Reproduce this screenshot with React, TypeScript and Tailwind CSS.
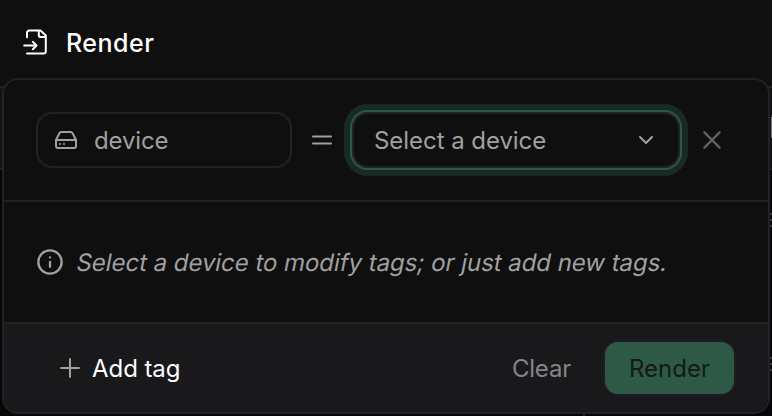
import React from "react";

function Svg({ size, className, children, sw = 2, box = 24 }: { size: number; className?: string; children: React.ReactNode; sw?: number; box?: number }) {
  return (
    <svg width={size} height={size} viewBox={`0 0 ${box} ${box}`} fill="none" stroke="currentColor" strokeWidth={sw} strokeLinecap="round" strokeLinejoin="round" className={`shrink-0 ${className ?? ""}`}>
      {children}
    </svg>
  );
}

// Edge of a table row's text, mostly hidden behind the popover
function Sliver({ className }: { className: string }) {
  return (
    <div className={`absolute right-0 flex w-0.5 flex-col gap-1 ${className}`}>
      <i className="h-0.5 bg-[#37373a]" />
      <i className="h-0.5 bg-[#37373a]" />
      <i className="h-0.5 bg-[#37373a]" />
    </div>
  );
}

export default function App() {
  return (
    <div className="relative flex h-[416px] w-[772px] flex-col overflow-hidden bg-[#0f0f0f] font-['Inter','Liberation_Sans',sans-serif] text-[24px] leading-8 text-[#a0a0a0]">
      {/* page content that shows round the popover */}
      <div className="absolute inset-x-0 top-[86px] bottom-0 border-t-2 border-[#222225] bg-[#060608]">
        <div className="h-[82px] border-b-2 border-[#222225] bg-[#121214]" />
        <div className="absolute top-[29px] right-0 h-[21px] w-px bg-[#77777a]" />
        <Sliver className="top-[125px]" />
        <Sliver className="top-[269px]" />
        <div className="absolute right-[187px] bottom-0 h-[6px] w-0.5 bg-[#222225]" />
      </div>

      <header className="flex h-[78px] shrink-0 items-center pt-2 pl-[21px] text-white">
        <Svg size={28} box={28}>
          <path d="M6 8.2V3.8a2.3 2.3 0 0 1 2.3-2.3h11.2l5.3 5v15.8a2.3 2.3 0 0 1-2.3 2.3H6" />
          <path d="M17.8 1.8v4.4a1.8 1.8 0 0 0 1.8 1.8h5" />
          <path d="M3.2 16.5h12" />
          <path d="m11.8 12.8 3.7 3.7-3.7 3.7" />
        </Svg>
        <h1 className="ml-[17px] text-[25px] font-medium tracking-[0.5px]">Render</h1>
      </header>

      <section className="relative mx-[2px] flex h-[336px] flex-col overflow-hidden rounded-[16px] border-2 border-[#222225] bg-[#0f0f0f]">
        <div className="flex h-[122px] shrink-0 items-center border-b-2 border-[#222225] pl-8">
          <div className="flex h-14 w-64 items-center rounded-[16px] border-2 border-[#222225] pl-4">
            <Svg size={24}>
              <path d="M22 12H2" />
              <path d="M5.45 5.11 2 12v6a2 2 0 0 0 2 2h16a2 2 0 0 0 2-2v-6l-3.45-6.89A2 2 0 0 0 16.76 4H7.24a2 2 0 0 0-1.79 1.11z" />
              <path d="M6 16h.01M10 16h.01" />
            </Svg>
            <span className="ml-4 pt-0.5 tracking-[-0.15px]">device</span>
          </div>
          <Svg size={24} className="ml-[18px]"><path d="M3 8.5h18M3 15.5h18" /></Svg>
          <button className="ml-[18px] flex h-[56px] w-[328px] items-center justify-between rounded-[16px] border-2 border-[#222225] pr-5 pl-5 shadow-[0_0_0_2px_#2d5946,0_0_0_8px_#192a23]">
            <span className="pt-0.5 tracking-[-0.05px]">Select a device</span>
            <Svg size={24}><path d="m6 9 6 6 6-6" /></Svg>
          </button>
          <Svg size={28} className="ml-[18px] text-[#616161]"><path d="m5.5 5.5 13 13M18.5 5.5l-13 13" /></Svg>
        </div>
        <div className="flex h-[120px] shrink-0 items-center pl-8">
          <Svg size={28}>
            <circle cx="12" cy="12" r="10" />
            <path d="M12 12v4M12 8h.01" />
          </Svg>
          {/* slanted upright face keeps the two-storey "a" */}
          <span className="ml-[13px] -skew-x-[11deg] pt-0.5 tracking-[-0.05px]">Select a device to modify tags; or just add new tags.</span>
        </div>
        <footer className="flex h-[90px] items-center border-t-2 border-[#222225] bg-[#19191b] pl-[54px]">
          <Svg size={24}><path d="M3 12h18M12 3v18" /></Svg>
          <span className="ml-2.5 pt-0.5 tracking-[-0.06px] text-white">Add tag</span>
          <span className="ml-auto pt-0.5 tracking-[-0.2px] text-[#858587]">Clear</span>
          <button className="mr-[34px] ml-[34px] h-[52px] w-[129px] rounded-[13px] bg-[#2d5946] pt-0.5 text-[#151918] shadow-[0_0_0_2px_#1e1e21]">Render</button>
        </footer>
      </section>
    </div>
  );
}
